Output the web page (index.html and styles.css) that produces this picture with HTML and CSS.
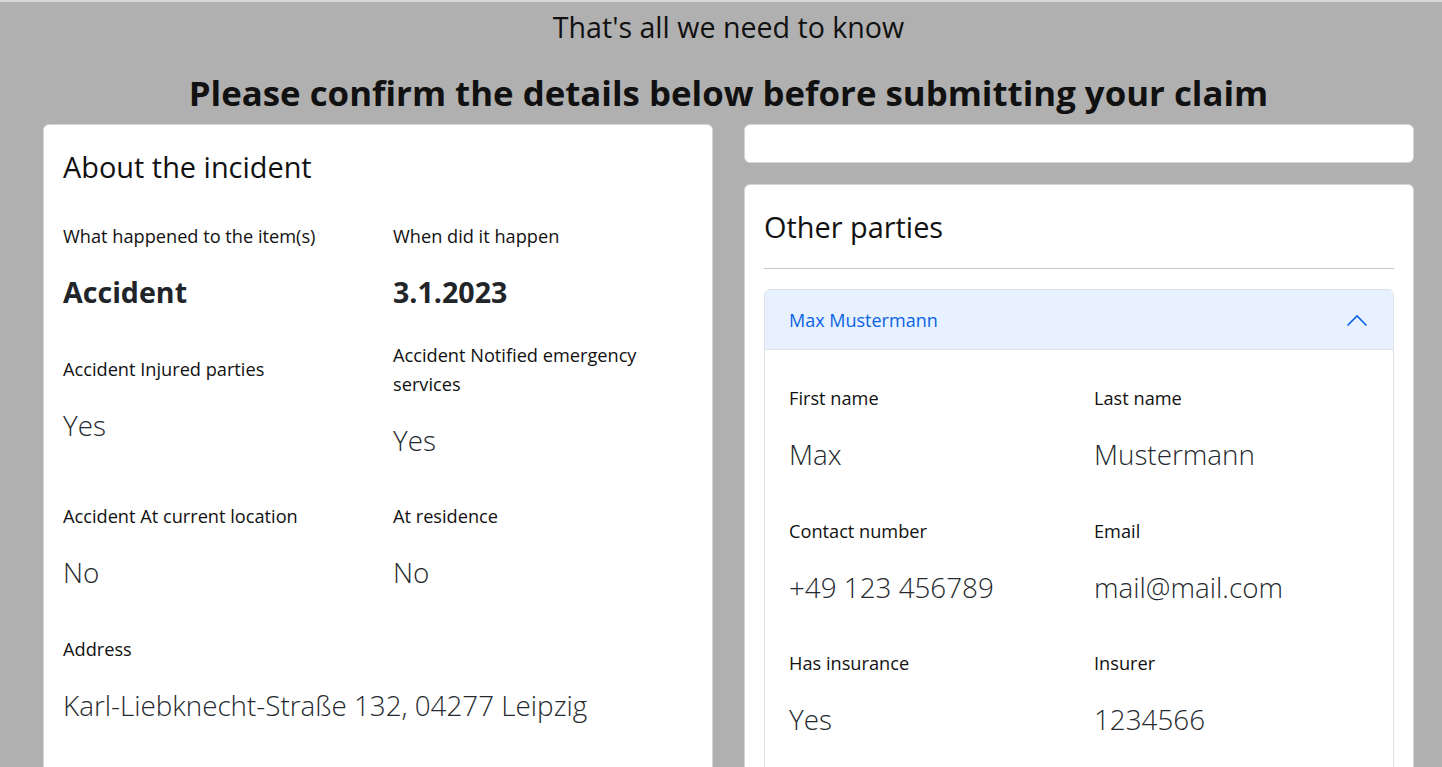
FILE: index.html
```html
<!DOCTYPE html>
<html lang="en">
<head>
<meta charset="utf-8">
<title>Confirm claim</title>
<link rel="stylesheet" href="styles.css">
</head>
<body>
<main class="page">
  <p class="intro">That's all we need to know</p>
  <h1 class="title">Please confirm the details below before submitting your claim</h1>
  <div class="columns">
    <div class="col">
      <section class="card">
        <h2 class="card-title">About the incident</h2>
        <div class="fields">
          <div class="field field-first">
            <div class="label">What happened to the item(s)</div>
            <div class="value value-bold">Accident</div>
          </div>
          <div class="field field-first">
            <div class="label">When did it happen</div>
            <div class="value value-bold">3.1.2023</div>
          </div>
          <div class="field">
            <div class="label">Accident Injured parties</div>
            <div class="value">Yes</div>
          </div>
          <div class="field">
            <div class="label">Accident Notified emergency services</div>
            <div class="value">Yes</div>
          </div>
          <div class="field">
            <div class="label">Accident At current location</div>
            <div class="value">No</div>
          </div>
          <div class="field">
            <div class="label">At residence</div>
            <div class="value">No</div>
          </div>
          <div class="field field-wide field-last">
            <div class="label">Address</div>
            <div class="value">Karl-Liebknecht-Straße 132, 04277 Leipzig</div>
          </div>
        </div>
        <h2 class="card-title">Police report</h2>
      </section>
    </div>
    <div class="col">
      <section class="card card-empty"></section>
      <section class="card">
        <h2 class="card-title">Other parties</h2>
        <hr class="divider">
        <div class="accordion">
          <div class="acc-head">
            <span>Max Mustermann</span>
            <svg class="chevron" width="22" height="14" viewBox="0 0 22 14" aria-hidden="true"><polyline points="1.5,12.5 11,3 20.5,12.5" fill="none" stroke="#0c63e4" stroke-width="1.6"/></svg>
          </div>
          <div class="acc-body">
            <div class="fields fields-acc">
              <div class="field">
                <div class="label">First name</div>
                <div class="value">Max</div>
              </div>
              <div class="field">
                <div class="label">Last name</div>
                <div class="value">Mustermann</div>
              </div>
              <div class="field">
                <div class="label">Contact number</div>
                <div class="value">+49 123 456789</div>
              </div>
              <div class="field">
                <div class="label">Email</div>
                <div class="value">mail@mail.com</div>
              </div>
              <div class="field">
                <div class="label">Has insurance</div>
                <div class="value">Yes</div>
              </div>
              <div class="field">
                <div class="label">Insurer</div>
                <div class="value">1234566</div>
              </div>
            </div>
          </div>
        </div>
      </section>
    </div>
  </div>
</main>
</body>
</html>
```

FILE: styles.css
```css
html, body {
  margin: 0;
  padding: 0;
  overflow: hidden;
}
body {
  background: #b0b0b0;
  border-top: 2px solid #d8d8d8;
  font-family: "Open Sans", "Noto Sans", sans-serif;
  color: #212529;
}
.page {
  padding-left: 15px;
}
.intro {
  margin: 8px 0 0;
  text-align: center;
  font-size: 28.6px;
  line-height: 34px;
  color: #111;
}
.title {
  margin: 27px 0 0;
  text-align: center;
  font-size: 34.8px;
  line-height: 44px;
  font-weight: 700;
  color: #111;
}
.columns {
  display: grid;
  grid-template-columns: 670px 670px;
  column-gap: 31px;
  margin: 9px 0 0 28px;
  align-items: start;
}
.col {
  display: flex;
  flex-direction: column;
  gap: 21px;
}
.card {
  background: #fff;
  border: 1px solid #d6d6d6;
  border-radius: 6px;
  padding: 25px 19px 20px;
}
.card-empty {
  height: 39px;
  box-sizing: border-box;
  padding: 0;
}
.card-title {
  margin: 0;
  font-size: 28.9px;
  line-height: 34px;
  font-weight: 400;
  color: #111;
}
.fields {
  display: grid;
  grid-template-columns: 300px 300px;
  column-gap: 30px;
  align-items: center;
  margin-top: 38px;
}
.field {
  padding-bottom: 42.5px;
}
.field-first {
  padding-bottom: 28.5px;
}
.field-wide {
  grid-column: 1 / span 2;
}
.field-last {
  padding-bottom: 38px;
}
.label {
  font-size: 18.2px;
  line-height: 29px;
  color: #111;
}
.value {
  margin-top: 21px;
  font-size: 27.8px;
  line-height: 40px;
  font-weight: 300;
  color: #262a2e;
  white-space: nowrap;
}
.value-bold {
  font-weight: 700;
  font-size: 28.6px;
  color: #212529;
}
.divider {
  margin: 24px 0 20px;
  border: 0;
  border-top: 1px solid #c8c8c8;
}
.accordion {
  border: 1px solid #dee2e6;
  border-radius: 6px;
  overflow: hidden;
}
.acc-head {
  display: flex;
  align-items: center;
  justify-content: space-between;
  height: 60px;
  padding: 1px 25px 0 24px;
  box-sizing: border-box;
  background: #e7f1ff;
  border-bottom: 1px solid #dee2e6;
  color: #0c63e4;
  font-size: 18px;
}
.chevron {
  display: block;
}
.acc-body {
  padding: 34px 24px 0;
}
.fields-acc {
  margin-top: 0;
  grid-template-columns: 275px 275px;
}
```
